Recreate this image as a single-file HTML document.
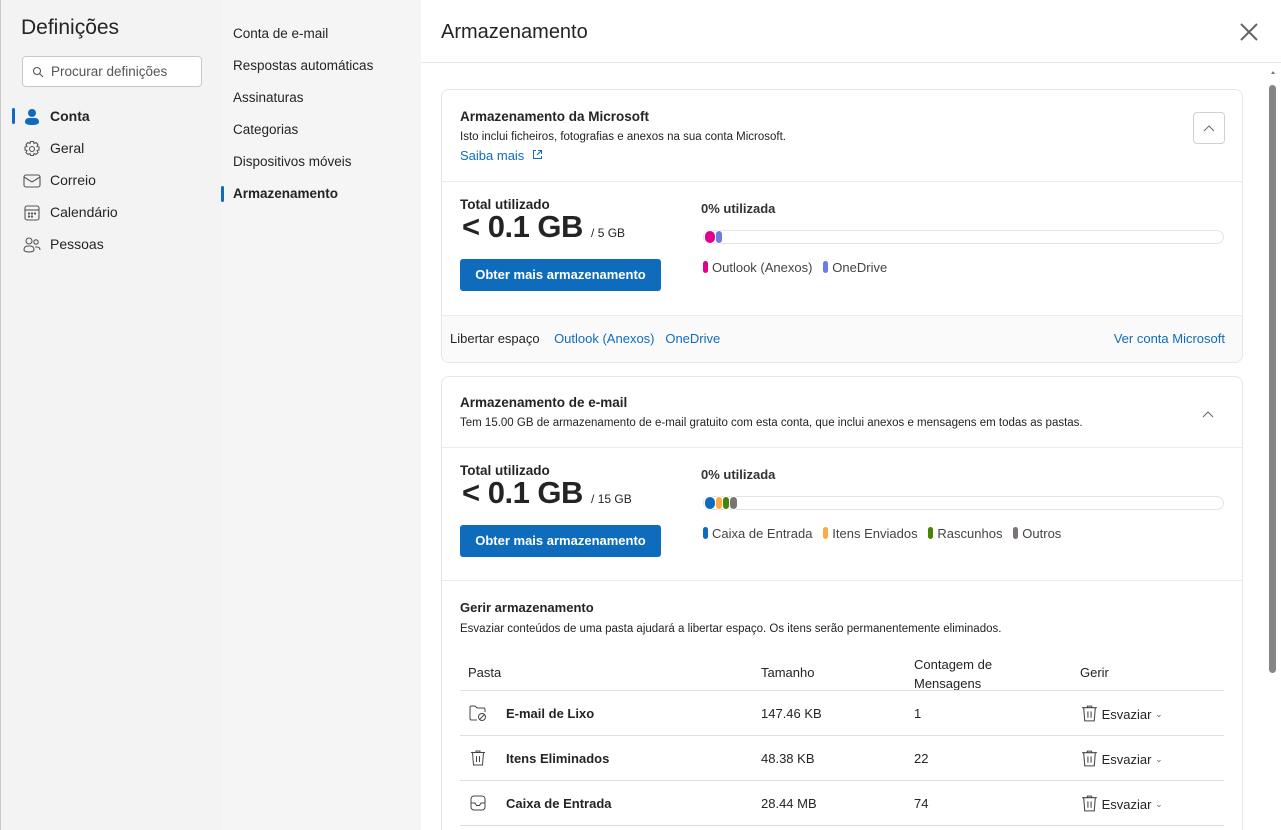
<!DOCTYPE html>
<html style="width:1281px;height:830px;overflow:hidden"><head><meta charset="utf-8"><style>
*{box-sizing:border-box;margin:0;padding:0}
html,body{overflow:hidden}
body{width:1281px;height:830px;overflow:hidden;font-family:"Liberation Sans",sans-serif;color:#242424;background:#fff;position:relative}
.a{position:absolute;white-space:nowrap}
#l{position:absolute;left:0;top:0;width:221px;height:830px;background:#f3f3f3;border-left:1px solid #c8c8c8}
#m{position:absolute;left:221px;top:0;width:200px;height:830px;background:#f5f5f5}
.nav{font-size:14px;color:#242424}
.mid{font-size:13.5px;color:#242424}
.card{position:absolute;left:441px;width:802px;border:1px solid #e6e6e6;border-radius:8px;background:#fff;overflow:hidden}
.h{font-size:13.5px;font-weight:bold}
.s{font-size:11.5px;color:#242424}
.lnk{color:#0f6cbd}
.btn{position:absolute;background:#0f6cbd;color:#fff;font-weight:bold;font-size:13px;border-radius:3px;text-align:center;line-height:32px;width:201px;height:32px}
.bar{position:absolute;height:14px;border:1px solid #e3e3e3;border-radius:7px;background:#fff}
.seg{position:absolute;top:-1px;height:14px;border-radius:6px;border:1px solid #fff}
.dot{display:inline-block;width:5px;height:12px;border-radius:3px;vertical-align:-1px;margin-right:4px}
.leg{font-size:13px;color:#444}
.row{position:absolute;left:460px;width:764px;border-top:1px solid #e0e0e0}
.t{font-size:13px}
</style></head><body>
<div id="l">
<div class="a" style="left:20px;top:16px;font-size:21px;color:#242424">Definições</div>
<div class="a" style="left:21px;top:56px;width:180px;height:31px;border:1px solid #c8c8c8;border-radius:4px;background:#fff"></div>
<svg class="a" style="left:31px;top:66px" width="12" height="12" viewBox="0 0 12 12"><circle cx="5" cy="5" r="3.5" fill="none" stroke="#555" stroke-width="1.1"/><path d="M7.5 7.5L11 11" stroke="#555" stroke-width="1.1"/></svg>
<div class="a" style="left:50px;top:64px;font-size:13.5px;color:#555">Procurar definições</div>
<div class="a" style="left:11px;top:108px;width:3px;height:16px;background:#0f6cbd;border-radius:2px"></div>
<svg class="a" style="left:22px;top:108px" width="18" height="18" viewBox="0 0 18 18"><circle cx="9" cy="5" r="4" fill="#0f6cbd"/><path d="M2 14c0-3 2-4 4-4h6c2 0 4 1 4 4 0 2-3 3-7 3s-7-1-7-3z" fill="#0f6cbd"/></svg>
<div class="a nav" style="left:49px;top:108px;font-weight:bold">Conta</div>
<svg class="a" style="left:22px;top:140px" width="18" height="18" viewBox="0 0 18 18" fill="none" stroke="#555" stroke-width="1.1"><circle cx="9" cy="9" r="2.5"/><path d="M7.5 1.5h3l.5 2 2-1 2 2-1 2 2 .5v3l-2 .5 1 2-2 2-2-1-.5 2h-3l-.5-2-2 1-2-2 1-2-2-.5v-3l2-.5-1-2 2-2 2 1z"/></svg>
<div class="a nav" style="left:49px;top:140px">Geral</div>
<svg class="a" style="left:22px;top:174px" width="18" height="14" viewBox="0 0 18 14" fill="none" stroke="#555" stroke-width="1.1"><rect x="1" y="1" width="16" height="12" rx="2"/><path d="M1 3l8 5 8-5"/></svg>
<div class="a nav" style="left:49px;top:172px">Correio</div>
<svg class="a" style="left:23px;top:205px" width="16" height="16" viewBox="0 0 16 16" fill="none" stroke="#555" stroke-width="1.1"><rect x="1" y="1" width="14" height="14" rx="2"/><path d="M1 5h14"/><circle cx="5" cy="8.5" r=".6" fill="#555"/><circle cx="8" cy="8.5" r=".6" fill="#555"/><circle cx="11" cy="8.5" r=".6" fill="#555"/><circle cx="5" cy="11.5" r=".6" fill="#555"/><circle cx="8" cy="11.5" r=".6" fill="#555"/></svg>
<div class="a nav" style="left:49px;top:204px">Calendário</div>
<svg class="a" style="left:22px;top:237px" width="18" height="16" viewBox="0 0 18 16" fill="none" stroke="#555" stroke-width="1.1"><circle cx="6" cy="4" r="3"/><circle cx="13" cy="5" r="2.2"/><path d="M1 13c0-3 2-4 4-4h2c2 0 4 1 4 4 0 1-2 2-5 2s-5-1-5-2zM12 10h2c2 0 3 1 3 3"/></svg>
<div class="a nav" style="left:49px;top:236px">Pessoas</div>
</div>
<div id="m">
<div class="a mid" style="left:12px;top:26px">Conta de e-mail</div>
<div class="a mid" style="left:12px;top:58px">Respostas automáticas</div>
<div class="a mid" style="left:12px;top:90px">Assinaturas</div>
<div class="a mid" style="left:12px;top:122px">Categorias</div>
<div class="a mid" style="left:12px;top:154px">Dispositivos móveis</div>
<div class="a" style="left:0;top:186px;width:3px;height:16px;background:#0f6cbd;border-radius:2px"></div>
<div class="a mid" style="left:12px;top:186px;font-weight:bold">Armazenamento</div>
</div>
<div class="a" style="left:441px;top:21px;font-size:20px">Armazenamento</div>
<svg class="a" style="left:1240px;top:23px" width="18" height="18" viewBox="0 0 18 18"><path d="M1 1l16 16M17 1L1 17" stroke="#666" stroke-width="2"/></svg>
<div class="a" style="left:421px;top:62px;width:860px;height:1px;background:#e6e6e6"></div>
<div class="a" style="left:1271px;top:71px;width:0;height:0;border-left:2px solid transparent;border-right:2px solid transparent;border-bottom:3px solid #777"></div>
<div class="a" style="left:1269px;top:85px;width:7px;height:588px;background:#858585;border-radius:4px"></div>

<div class="card" style="top:89px;height:274px">
<div class="a h" style="left:18px;top:19px">Armazenamento da Microsoft</div>
<div class="a s" style="left:18px;top:41px">Isto inclui ficheiros, fotografias e anexos na sua conta Microsoft.</div>
<div class="a lnk" style="left:18px;top:58px;font-size:13px">Saiba mais <svg width="11" height="11" viewBox="0 0 11 11" style="margin-left:4px" fill="none" stroke="#0f6cbd"><path d="M4 1.5H1.5v8h8V7M6 1.5h3.5V5M9.5 1.5L5 6"/></svg></div>
<div class="a" style="left:751px;top:22px;width:32px;height:32px;border:1px solid #d1d1d1;border-radius:4px"><svg style="position:absolute;left:9px;top:11px" width="12" height="8" viewBox="0 0 12 8"><path d="M1 7l5-5 5 5" fill="none" stroke="#666"/></svg></div>
<div class="a" style="left:0;top:91px;width:802px;height:1px;background:#ececec"></div>
<div class="a" style="left:18px;top:107px;font-size:13.5px;font-weight:600">Total utilizado</div>
<div class="a" style="left:20px;top:119px;font-size:31px;font-weight:bold;letter-spacing:-0.5px">&lt; 0.1 GB <span style="font-size:12px;font-weight:normal;letter-spacing:0">/ 5 GB</span></div>
<div class="btn" style="left:18px;top:169px">Obter mais armazenamento</div>
<div class="a" style="left:259px;top:111px;font-size:13px;font-weight:bold;color:#333">0% utilizada</div>
<div class="bar" style="left:261px;top:140px;width:521px"><div class="seg" style="left:0;width:12px;background:#e3008c"></div><div class="seg" style="left:11px;width:8px;background:#6c7ce7"></div></div>
<div class="a leg" style="left:261px;top:170px"><span class="dot" style="background:#e3008c"></span>Outlook (Anexos) &nbsp; <span class="dot" style="background:#6c7ce7"></span>OneDrive</div>
<div class="a" style="left:0;top:225px;width:802px;height:49px;background:#fafafa;border-top:1px solid #ececec"></div>
<div class="a t" style="left:8px;top:241px">Libertar espaço &nbsp; <span class="lnk">&nbsp;Outlook (Anexos) &nbsp;&nbsp;OneDrive</span></div>
<div class="a t lnk" style="right:17px;top:241px">Ver conta Microsoft</div>
</div>

<div class="card" style="top:376px;height:470px">
<div class="a h" style="left:18px;top:18px">Armazenamento de e-mail</div>
<div class="a s" style="left:18px;top:40px">Tem 15.00 GB de armazenamento de e-mail gratuito com esta conta, que inclui anexos e mensagens em todas as pastas.</div>
<svg class="a" style="left:760px;top:33px" width="12" height="8" viewBox="0 0 12 8"><path d="M1 7l5-5 5 5" fill="none" stroke="#666"/></svg>
<div class="a" style="left:0;top:70px;width:802px;height:1px;background:#ececec"></div>
<div class="a" style="left:18px;top:86px;font-size:13.5px;font-weight:600">Total utilizado</div>
<div class="a" style="left:20px;top:98px;font-size:31px;font-weight:bold;letter-spacing:-0.5px">&lt; 0.1 GB <span style="font-size:12px;font-weight:normal;letter-spacing:0">/ 15 GB</span></div>
<div class="btn" style="left:18px;top:148px">Obter mais armazenamento</div>
<div class="a" style="left:259px;top:90px;font-size:13px;font-weight:bold;color:#333">0% utilizada</div>
<div class="bar" style="left:261px;top:119px;width:521px"><div class="seg" style="left:0;width:12px;background:#0f6cbd"></div><div class="seg" style="left:11px;width:8px;background:#ffaa44"></div><div class="seg" style="left:18px;width:8px;background:#498205"></div><div class="seg" style="left:25px;width:9px;background:#7a7574"></div></div>
<div class="a leg" style="left:261px;top:149px"><span class="dot" style="background:#0f6cbd"></span>Caixa de Entrada &nbsp; <span class="dot" style="background:#ffaa44"></span>Itens Enviados &nbsp; <span class="dot" style="background:#498205"></span>Rascunhos &nbsp; <span class="dot" style="background:#7a7574"></span>Outros</div>
<div class="a" style="left:0;top:203px;width:802px;height:1px;background:#ececec"></div>
<div class="a h" style="left:18px;top:223px;font-size:13px">Gerir armazenamento</div>
<div class="a s" style="left:18px;top:246px">Esvaziar conteúdos de uma pasta ajudará a libertar espaço. Os itens serão permanentemente eliminados.</div>
</div>

<div class="a t" style="left:468px;top:665px">Pasta</div>
<div class="a t" style="left:761px;top:665px">Tamanho</div>
<div class="a t" style="left:914px;top:655px;line-height:19px">Contagem de<br>Mensagens</div>
<div class="a t" style="left:1080px;top:665px">Gerir</div>
<div class="row" style="top:690px"></div>
<div class="row" style="top:735px"></div>
<div class="row" style="top:780px"></div>
<div class="row" style="top:825px"></div>

<svg class="a" style="left:469px;top:705px" width="18" height="17" viewBox="0 0 18 17" fill="none" stroke="#444" stroke-width="1"><path d="M8 15H2.5A1.5 1.5 0 0 1 1 13.5v-11A1.5 1.5 0 0 1 2.5 1H6l2 2h6.5A1.5 1.5 0 0 1 16 4.5V7"/><circle cx="13" cy="12" r="3.5"/><path d="M10.5 14.5l5-5"/></svg>
<div class="a t" style="left:506px;top:706px;font-weight:bold">E-mail de Lixo</div>
<div class="a t" style="left:761px;top:706px">147.46 KB</div>
<div class="a t" style="left:914px;top:706px">1</div>
<svg class="a" style="left:470px;top:749px" width="16" height="18" viewBox="0 0 16 18" fill="none" stroke="#444" stroke-width="1"><path d="M1 3.5h14M6 3.5V2h4v1.5M2.5 3.5l1 12.5h9l1-12.5M6.5 7v6M9.5 7v6"/></svg>
<div class="a t" style="left:506px;top:751px;font-weight:bold">Itens Eliminados</div>
<div class="a t" style="left:761px;top:751px">48.38 KB</div>
<div class="a t" style="left:914px;top:751px">22</div>
<svg class="a" style="left:470px;top:795px" width="16" height="16" viewBox="0 0 16 16" fill="none" stroke="#444" stroke-width="1"><rect x="1" y="1" width="14" height="14" rx="3"/><path d="M1 8h4l1.5 2.5h3L11 8h4"/></svg>
<div class="a t" style="left:506px;top:796px;font-weight:bold">Caixa de Entrada</div>
<div class="a t" style="left:761px;top:796px">28.44 MB</div>
<div class="a t" style="left:914px;top:796px">74</div>

<div class="a t" style="left:1081px;top:704px"><svg width="17" height="19" viewBox="0 0 16 18" fill="none" stroke="#444" stroke-width="1" style="vertical-align:-4px"><path d="M1 3.5h14M6 3.5V2h4v1.5M2.5 3.5l1 12.5h9l1-12.5M6.5 7v6M9.5 7v6"/></svg> Esvaziar <span style="font-size:9px;color:#666;vertical-align:2px">&#8964;</span></div>
<div class="a t" style="left:1081px;top:749px"><svg width="17" height="19" viewBox="0 0 16 18" fill="none" stroke="#444" stroke-width="1" style="vertical-align:-4px"><path d="M1 3.5h14M6 3.5V2h4v1.5M2.5 3.5l1 12.5h9l1-12.5M6.5 7v6M9.5 7v6"/></svg> Esvaziar <span style="font-size:9px;color:#666;vertical-align:2px">&#8964;</span></div>
<div class="a t" style="left:1081px;top:794px"><svg width="17" height="19" viewBox="0 0 16 18" fill="none" stroke="#444" stroke-width="1" style="vertical-align:-4px"><path d="M1 3.5h14M6 3.5V2h4v1.5M2.5 3.5l1 12.5h9l1-12.5M6.5 7v6M9.5 7v6"/></svg> Esvaziar <span style="font-size:9px;color:#666;vertical-align:2px">&#8964;</span></div>
</body></html>
